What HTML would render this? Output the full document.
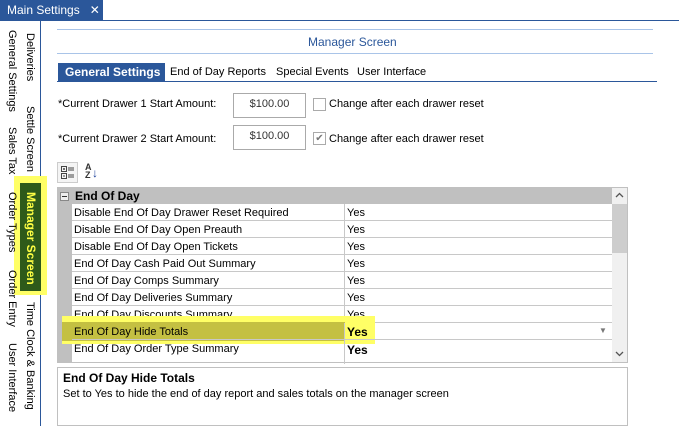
<!DOCTYPE html>
<html><head><meta charset="utf-8"><style>
*{margin:0;padding:0;box-sizing:border-box}
body{width:679px;height:434px;background:#fff;font-family:"Liberation Sans",sans-serif;font-size:11px;color:#000;position:relative;overflow:hidden}
.a{position:absolute;white-space:nowrap}
.v{position:absolute;transform-origin:0 0;transform:rotate(90deg);white-space:nowrap;font-size:11px}
.row{position:absolute;left:72px;width:540px;height:17px;border-bottom:1px solid #c8c8c8}
.row .n{position:absolute;left:2px;top:3px}
.row .y{position:absolute;left:275px;top:3px}
.row:before{content:"";position:absolute;left:272px;top:0;bottom:-1px;border-left:1px solid #c8c8c8}
</style></head><body>
<div class="a" style="left:0;top:0;width:103px;height:20px;background:#2b579a;color:#fff;font-size:12px;padding:3px 0 0 7px">Main Settings&nbsp;&nbsp; ✕</div>
<div class="a" style="left:0;top:20px;width:679px;height:1px;background:#2b579a"></div>
<div class="a" style="left:40px;top:20px;width:1px;height:406px;background:#2b579a"></div>
<div class="a" style="left:14px;top:176px;width:33px;height:119px;background:#ffff66"></div>
<div class="a" style="left:20px;top:183px;width:21px;height:108px;background:#2e5a1a"></div>
<div class="v" style="left:18px;top:30px">General Settings</div>
<div class="v" style="left:18px;top:127px">Sales Tax</div>
<div class="v" style="left:18px;top:192px">Order Types</div>
<div class="v" style="left:18px;top:270px">Order Entry</div>
<div class="v" style="left:18px;top:343px">User Interface</div>
<div class="v" style="left:36px;top:33px">Deliveries</div>
<div class="v" style="left:36px;top:106px">Settle Screen</div>
<div class="v" style="left:38px;top:192px;color:#ffff44;font-weight:bold;font-size:12px">Manager Screen</div>
<div class="v" style="left:36px;top:302px">Time Clock &amp; Banking</div>

<div class="a" style="left:57px;top:29px;width:596px;height:1px;background:#a9c4e8"></div>
<div class="a" style="left:57px;top:53px;width:596px;height:1px;background:#a9c4e8"></div>
<div class="a" style="left:308px;top:35px;color:#2b579a;font-size:12px">Manager Screen</div>
<div class="a" style="left:58px;top:63px;width:107px;height:19px;background:#2b579a;color:#fff;font-weight:bold;font-size:12px;padding:2px 0 0 7px">General Settings</div>
<div class="a" style="left:170px;top:66px">End of Day Reports</div>
<div class="a" style="left:276px;top:66px">Special Events</div>
<div class="a" style="left:357px;top:66px">User Interface</div>
<div class="a" style="left:57px;top:81px;width:600px;height:1px;background:#2b579a"></div>

<div class="a" style="left:58px;top:98px">*Current Drawer 1 Start Amount:</div>
<div class="a" style="left:233px;top:93px;width:73px;height:25px;border:1px solid #aaa;color:#333;text-align:center;padding-top:4px">$100.00</div>
<div class="a" style="left:313px;top:98px;width:13px;height:13px;border:1px solid #aaa"></div>
<div class="a" style="left:329px;top:98px">Change after each drawer reset</div>
<div class="a" style="left:58px;top:133px">*Current Drawer 2 Start Amount:</div>
<div class="a" style="left:233px;top:125px;width:73px;height:25px;border:1px solid #aaa;color:#333;text-align:center;padding-top:4px">$100.00</div>
<div class="a" style="left:313px;top:132px;width:13px;height:13px;border:1px solid #aaa;color:#777;font-size:10px;line-height:11px;text-align:center">✔</div>
<div class="a" style="left:329px;top:133px">Change after each drawer reset</div>

<div class="a" style="left:57px;top:162px;width:21px;height:21px;border:1px solid #ccc;background:#f4f4f4"></div>
<svg class="a" style="left:61px;top:166px" width="14" height="14"><g fill="none" stroke="#444"><rect x="0.5" y="0.5" width="5" height="5"/><rect x="0.5" y="7.5" width="5" height="5"/><path d="M7 2h6M7 4h6M7 9h6M7 11h6M2 3h2M3 2v2M2 10h2"/></g></svg>
<div class="a" style="left:85px;top:163px;font-size:9px;line-height:8px;font-weight:bold;color:#333">A<br>Z</div>
<div class="a" style="left:92px;top:166px;color:#1a3f9a;font-size:12px">↓</div>

<div class="a" style="left:57px;top:187px;width:571px;height:176px;border:1px solid #c0c0c0;background:#fff"></div>
<div class="a" style="left:57px;top:187px;width:555px;height:17px;background:#c0c0c0"></div>
<div class="a" style="left:57px;top:187px;width:15px;height:176px;background:#c0c0c0"></div>
<div class="a" style="left:60px;top:192px;width:9px;height:9px;border:1px solid #888;background:#eee"></div>
<div class="a" style="left:62px;top:196px;width:5px;height:1px;background:#333"></div>
<div class="a" style="left:75px;top:189px;font-weight:bold;font-size:12px">End Of Day</div>
<div class="row" style="top:204px"><span class="n">Disable End Of Day Drawer Reset Required</span><span class="y">Yes</span></div>
<div class="row" style="top:221px"><span class="n">Disable End Of Day Open Preauth</span><span class="y">Yes</span></div>
<div class="row" style="top:238px"><span class="n">Disable End Of Day Open Tickets</span><span class="y">Yes</span></div>
<div class="row" style="top:255px"><span class="n">End Of Day Cash Paid Out Summary</span><span class="y">Yes</span></div>
<div class="row" style="top:272px"><span class="n">End Of Day Comps Summary</span><span class="y">Yes</span></div>
<div class="row" style="top:289px"><span class="n">End Of Day Deliveries Summary</span><span class="y">Yes</span></div>
<div class="row" style="top:306px"><span class="n">End Of Day Discounts Summary</span><span class="y">Yes</span></div>
<div class="a" style="left:62px;top:316px;width:313px;height:28px;background:#ffff66"></div>
<div class="a" style="left:62px;top:322px;width:283px;height:19px;background:#c4c042"></div>
<div class="row" style="top:323px"><span class="n">End Of Day Hide Totals</span><span class="y" style="font-weight:bold;font-size:12px;top:2px">Yes</span><span class="a" style="left:527px;top:3px;color:#777;font-size:8px">▼</span></div>
<div class="row" style="top:340px;height:23px;border:none"><span class="n">End Of Day Order Type Summary</span><span class="y" style="font-weight:bold;font-size:12px;top:3px">Yes</span></div>
<div class="a" style="left:612px;top:188px;width:15px;height:174px;background:#f0f0f0"></div>
<div class="a" style="left:612px;top:204px;width:15px;height:49px;background:#cdcdcd"></div>
<svg class="a" style="left:614px;top:191px" width="11" height="8"><path d="M2 6l3.5-3.5L9 6" fill="none" stroke="#555" stroke-width="1.3"/></svg>
<svg class="a" style="left:614px;top:350px" width="11" height="8"><path d="M2 2l3.5 3.5L9 2" fill="none" stroke="#555" stroke-width="1.3"/></svg>

<div class="a" style="left:57px;top:367px;width:571px;height:59px;border:1px solid #c0c0c0"></div>
<div class="a" style="left:63px;top:371px;font-weight:bold;font-size:12px">End Of Day Hide Totals</div>
<div class="a" style="left:63px;top:388px">Set to Yes to hide the end of day report and sales totals on the manager screen</div>
</body></html>
